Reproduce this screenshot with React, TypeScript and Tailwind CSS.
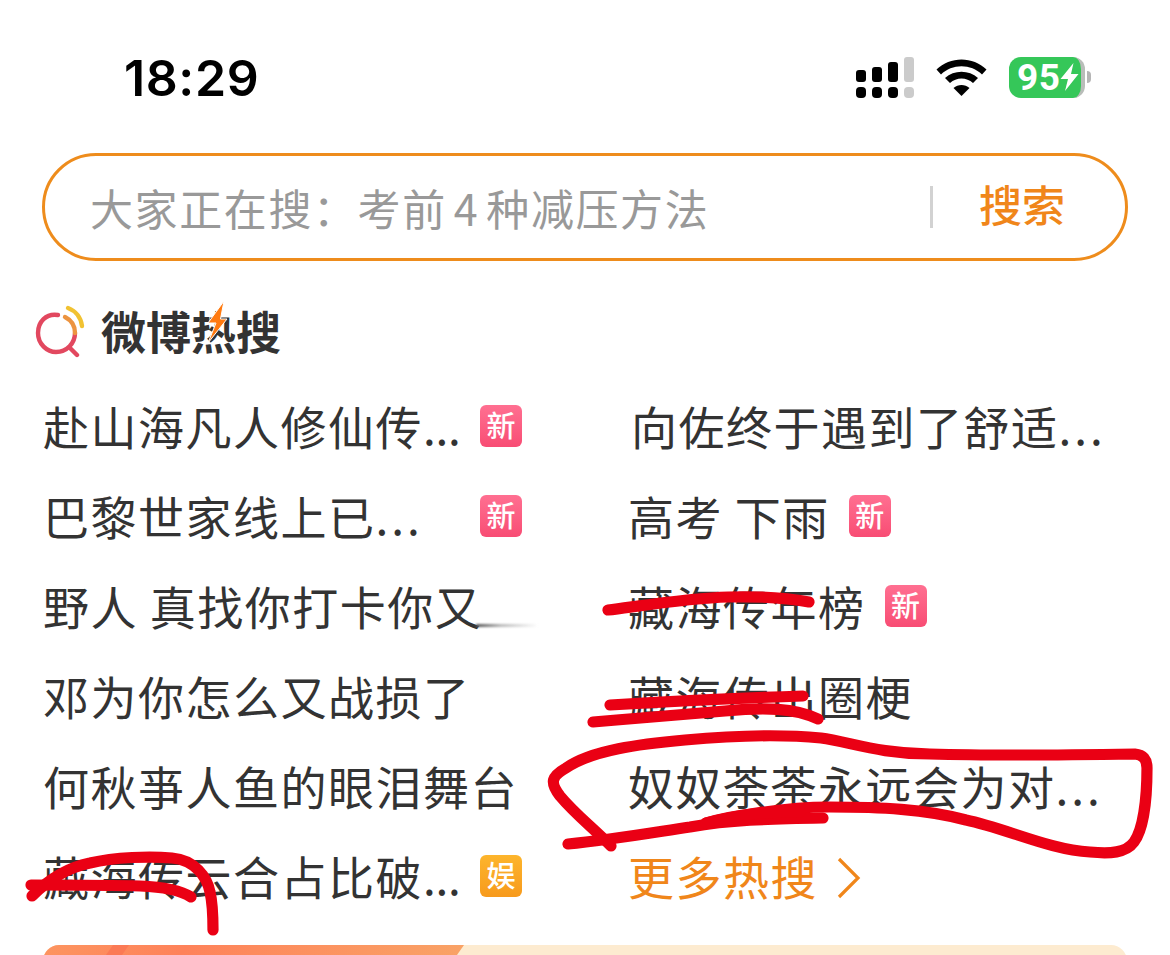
type HotItem = {
  text: string;
  dots?: 'tight' | 'wide';
  badge?: '新' | '娱';
  smear?: boolean;
  className?: string;
};

const leftItems: HotItem[] = [
  { text: '赴山海凡人修仙传', dots: 'tight', badge: '新' },
  { text: '巴黎世家线上已', dots: 'wide', badge: '新' },
  { text: '野人 真找你打卡你又', smear: true },
  { text: '邓为你怎么又战损了' },
  { text: '何秋亊人鱼的眼泪舞台' },
  { text: '藏海传云合占比破', dots: 'tight', badge: '娱' },
];

const rightItems: HotItem[] = [
  { text: '向佐终于遇到了舒适', dots: 'wide', className: 'pl-[3px]' },
  { text: '高考 下雨', badge: '新' },
  { text: '藏海传年榜', badge: '新' },
  { text: '藏海传出圈梗' },
  { text: '奴奴荼荼永远会为对', dots: 'wide' },
];

// hand-drawn marker strokes lying over the list
const markerStrokes = [
  'M608 610 C640 606 690 598 728 597 C765 596 788 598 809 602',
  'M610 705 C660 702 740 698 803 696',
  'M593 722 C640 718 690 714 725 711 C765 707 795 708 818 719',
  'M611 846 C592 827 575 814 560 796 C549 782 552 776 566 768 C592 750 640 744 685 740 C740 735 790 735 821 738 C850 742 880 754 930 754 C1000 756 1070 755 1135 754 Q1147 755 1147 768 C1147 800 1143 830 1134 842 C1126 853 1110 854 1090 852 C1050 850 1005 828 966 820 C925 809 880 807 829 807 C785 807 745 814 706 823',
  'M568 844 C610 840 650 833 690 827 C730 820 765 819 823 818',
  'M706 823 C740 813 770 812 800 812',
  'M32 896 C50 878 70 867 90 863 C115 857 150 856 172 858 C195 860 207 877 210 892 C213 905 213 918 213 930',
  'M31 885 C60 885 110 885 140 886 C165 887 180 890 191 897',
];

function StatusBar() {
  return (
    <header className="flex h-[153px] shrink-0 items-start justify-between pl-[124px] pr-[79px] pt-12">
      <div className="font-[Inter,sans-serif] text-[50px] font-semibold leading-[60px] tracking-[0.6px] text-black">
        18:29
      </div>
      <div className="flex h-[60px] items-center">
        <svg className="h-[42px] w-[59px]" viewBox="0 0 59 42">
          <rect x="1" y="13" width="10" height="12" rx="3" />
          <rect x="17" y="10" width="10" height="15" rx="3" />
          <rect x="33" y="5" width="10" height="20" rx="3" />
          <rect x="49" y="0" width="10" height="25" rx="3" fill="#cbcbcb" />
          <rect x="1" y="30" width="10" height="11" rx="4" />
          <rect x="17" y="30" width="10" height="11" rx="4" />
          <rect x="33" y="30" width="10" height="11" rx="4" />
          <rect x="49" y="30" width="10" height="11" rx="4" fill="#cbcbcb" />
        </svg>
        <svg className="ml-[22px] h-[38px] w-[51px]" viewBox="0 0 51 38">
          <path d="M0.5 10.5 C14 -3 37 -3 50.500 10.500 L46 15.500 C35 4.500 16 4.500 5 15.500 Z" />
          <path d="M9 19 C18 10.500 33 10.500 42 19 L37 24 C30.500 18 20.500 18 14 24 Z" />
          <path d="M17.500 29 C22 25 29 25 33.500 29 L25.500 37 Z" />
        </svg>
        <div className="mb-0.5 ml-[22px] flex items-center">
          <div className="flex h-[41px] w-[76px] items-center overflow-hidden rounded-[12px] border-r-4 border-[#b9bdb9] bg-[#35c759] pl-2">
            <span className="font-[Roboto,sans-serif] text-[37px] font-bold leading-none tracking-[0.5px] text-white">95</span>
            <svg className="h-[28px] w-[20px] shrink-0" viewBox="0 0 20 28">
              <path d="M13.500 0 L0.5 16 H8 L5 28 L18.500 11 H11 Z" fill="#fff" />
            </svg>
          </div>
          <div className="ml-0.5 h-3 w-1 rounded-r-full bg-[#b5b5b5]" />
        </div>
      </div>
    </header>
  );
}

function SearchBox() {
  return (
    <div className="mx-[42px] flex h-[108px] shrink-0 items-center rounded-full border-[3px] border-[#ee8c1c] pl-[45px] pr-[60px]">
      <div className="flex-1 whitespace-nowrap text-[43px] leading-[60px] tracking-[1.6px] text-[#999]">
        大家正在搜：考前<span className="ml-[5px] mr-[7px] pl-0.5">4</span>种减压方法
      </div>
      <div className="h-[42px] w-[3px] bg-[#d2d2d2]" />
      <button className="ml-[46px] -mt-2 text-[43px] font-medium leading-[60px] text-[#f0861a]">搜索</button>
    </div>
  );
}

function HotTitle() {
  return (
    <div className="flex h-[120px] shrink-0 items-center pl-[35px] pt-5">
      <svg className="h-[54px] w-[50px]" viewBox="35 304 50 54" fill="none" strokeWidth="4.4" strokeLinecap="round">
        <path d="M58 315 C46 313 38 322 38 333 C38 344 47 352 56 352 C67 352 75 343 75 333" stroke="#e2485f" />
        <path d="M65 317 C71 320 75 326 75 333" stroke="#ec9440" />
        <path d="M70 348 L77 355" stroke="#e2485f" />
        <path d="M68 308 C76 311 81 318 82 326" stroke="#f1c232" />
      </svg>
      <div className="relative ml-4">
        <h1 className="text-[45px] font-bold leading-[60px] text-[#333]">微博热搜</h1>
        <svg className="absolute left-[105px] top-0 h-[44px] w-[22px]" viewBox="0 0 22 44">
          <path d="M18 0 L2 22 H10 L2 42 L21 18 H14.500 Z" fill="#ff7a10" stroke="#fff" strokeWidth="1" />
        </svg>
      </div>
    </div>
  );
}

function Badge({ label }: { label: '新' | '娱' }) {
  const color = label === '新' ? 'from-[#ff6f91] to-[#f84c74]' : 'from-[#fdb52c] to-[#f79a1c]';
  return (
    <span className={`flex size-[42px] shrink-0 items-center justify-center rounded-md bg-linear-to-b ${color} pb-[3px] text-[29px] font-medium leading-none text-white`}>
      {label}
    </span>
  );
}

function HotRow({ item, spread }: { item: HotItem; spread?: boolean }) {
  return (
    <li className={`flex h-[90px] items-center whitespace-nowrap ${spread ? 'w-[479px] justify-between' : 'gap-[19px]'} ${item.className ?? ''}`}>
      <span className="-mt-0.5 flex items-center text-[46px] leading-[60px] tracking-[1.5px] text-[#333]">
        <span className="whitespace-pre">{item.text}</span>
        {item.dots && (
          <span className={item.dots === 'tight' ? 'tracking-[-0.3px]' : 'tracking-[3px]'}>...</span>
        )}
        {item.smear && (
          <span className="mt-10 -ml-1.5 h-[3px] w-[62px] bg-linear-to-r from-[#555] via-[#bbb] via-40% to-transparent blur-[1px]" />
        )}
      </span>
      {item.badge && <Badge label={item.badge} />}
    </li>
  );
}

export default function App() {
  return (
    <main className="relative flex h-[955px] w-[1170px] flex-col overflow-hidden bg-white font-['Noto_Sans_CJK_SC',sans-serif]" lang="zh-CN">
      <StatusBar />
      <SearchBox />
      <HotTitle />

      <section className="flex h-[564px] shrink-0 pl-[43px]">
        <ul className="w-[585px]">
          {leftItems.map((item) => (
            <HotRow key={item.text} item={item} spread />
          ))}
        </ul>
        <ul>
          {rightItems.map((item) => (
            <HotRow key={item.text} item={item} />
          ))}
          <li className="flex h-[90px] items-center gap-[19px] text-[46px] leading-[60px] tracking-[1.5px] text-[#f0861a]">
            <span className="-mt-0.5">更多热搜</span>
            <svg className="mt-1 h-[42px] w-6" viewBox="0 0 24 42" fill="none">
              <path d="M2 2 L21 21 L2 40" stroke="#f0861a" strokeWidth="3.2" />
            </svg>
          </li>
        </ul>
      </section>

      <div className="mx-[43px] flex h-40 shrink-0 overflow-hidden rounded-2xl bg-[#fdebd0]">
        <div className="-ml-10 w-[461px] origin-top -skew-x-[35deg] bg-linear-to-r from-[#fc9a62] via-[#fe825a] via-40% to-[#f9a266]">
          <div className="ml-[110px] h-full w-4 bg-[#fb7a55]" />
        </div>
      </div>

      <svg className="pointer-events-none absolute inset-0" width="1170" height="955" viewBox="0 0 1170 955" fill="none">
        {markerStrokes.map((d) => (
          <path key={d} d={d} stroke="#ea0014" strokeWidth="11.200" strokeLinecap="round" strokeLinejoin="round" />
        ))}
      </svg>
    </main>
  );
}
